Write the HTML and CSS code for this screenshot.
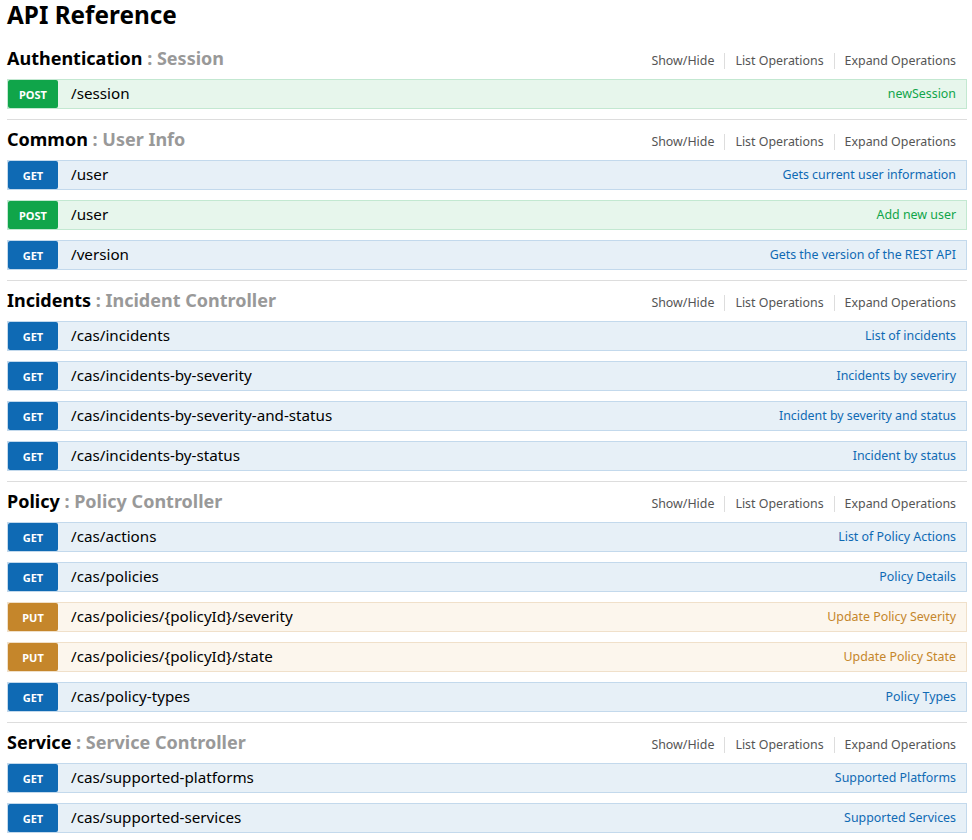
FILE: index.html
```html
<!DOCTYPE html>
<html lang="en">
<head>
<meta charset="utf-8">
<title>API Reference</title>
<link rel="stylesheet" href="styles.css">
</head>
<body>
<div class="page">
  <h1 class="title">API Reference</h1>

  <section class="resource first">
    <div class="heading">
      <h2 class="name">Authentication <span class="sub">: Session</span></h2>
      <ul class="options"><li>Show/Hide</li><li>List Operations</li><li>Expand Operations</li></ul>
    </div>
    <ul class="ops">
      <li class="op post"><span class="verb">POST</span><span class="path">/session</span><span class="desc">newSession</span></li>
    </ul>
  </section>

  <section class="resource">
    <div class="heading">
      <h2 class="name">Common <span class="sub">: User Info</span></h2>
      <ul class="options"><li>Show/Hide</li><li>List Operations</li><li>Expand Operations</li></ul>
    </div>
    <ul class="ops">
      <li class="op get"><span class="verb">GET</span><span class="path">/user</span><span class="desc">Gets current user information</span></li>
      <li class="op post"><span class="verb">POST</span><span class="path">/user</span><span class="desc">Add new user</span></li>
      <li class="op get"><span class="verb">GET</span><span class="path">/version</span><span class="desc">Gets the version of the REST API</span></li>
    </ul>
  </section>

  <section class="resource">
    <div class="heading">
      <h2 class="name">Incidents <span class="sub">: Incident Controller</span></h2>
      <ul class="options"><li>Show/Hide</li><li>List Operations</li><li>Expand Operations</li></ul>
    </div>
    <ul class="ops">
      <li class="op get"><span class="verb">GET</span><span class="path">/cas/incidents</span><span class="desc">List of incidents</span></li>
      <li class="op get"><span class="verb">GET</span><span class="path">/cas/incidents-by-severity</span><span class="desc">Incidents by severiry</span></li>
      <li class="op get"><span class="verb">GET</span><span class="path">/cas/incidents-by-severity-and-status</span><span class="desc">Incident by severity and status</span></li>
      <li class="op get"><span class="verb">GET</span><span class="path">/cas/incidents-by-status</span><span class="desc">Incident by status</span></li>
    </ul>
  </section>

  <section class="resource">
    <div class="heading">
      <h2 class="name">Policy <span class="sub">: Policy Controller</span></h2>
      <ul class="options"><li>Show/Hide</li><li>List Operations</li><li>Expand Operations</li></ul>
    </div>
    <ul class="ops">
      <li class="op get"><span class="verb">GET</span><span class="path">/cas/actions</span><span class="desc">List of Policy Actions</span></li>
      <li class="op get"><span class="verb">GET</span><span class="path">/cas/policies</span><span class="desc">Policy Details</span></li>
      <li class="op put"><span class="verb">PUT</span><span class="path">/cas/policies/{policyId}/severity</span><span class="desc">Update Policy Severity</span></li>
      <li class="op put"><span class="verb">PUT</span><span class="path">/cas/policies/{policyId}/state</span><span class="desc">Update Policy State</span></li>
      <li class="op get"><span class="verb">GET</span><span class="path">/cas/policy-types</span><span class="desc">Policy Types</span></li>
    </ul>
  </section>

  <section class="resource">
    <div class="heading">
      <h2 class="name">Service <span class="sub">: Service Controller</span></h2>
      <ul class="options"><li>Show/Hide</li><li>List Operations</li><li>Expand Operations</li></ul>
    </div>
    <ul class="ops">
      <li class="op get"><span class="verb">GET</span><span class="path">/cas/supported-platforms</span><span class="desc">Supported Platforms</span></li>
      <li class="op get"><span class="verb">GET</span><span class="path">/cas/supported-services</span><span class="desc">Supported Services</span></li>
    </ul>
  </section>
</div>
</body>
</html>
```

FILE: styles.css
```css
* { box-sizing: border-box; }
html, body { margin: 0; padding: 0; background: #fff; }
body {
  font-family: "Noto Sans", "Open Sans", "DejaVu Sans", sans-serif;
  color: #000;
}
.page {
  width: 960px;
  margin-left: 7px;
}
.title {
  margin: 0;
  height: 38px;
  font-size: 24.3px;
  font-weight: 700;
  line-height: 30px;
  padding-top: 0;
}
.resource {
  border-top: 1px solid #ddd;
}
.resource.first {
  border-top-color: transparent;
}
.heading {
  height: 40px;
  display: flex;
  align-items: center;
  justify-content: space-between;
}
.name {
  margin: -2px 0 0 0;
  font-size: 18px;
  font-weight: 700;
  line-height: 24px;
}
.sub { color: #999; }
.options {
  list-style: none;
  margin: 3px 0 0 0;
  padding: 0 11px 0 0;
  display: flex;
  font-size: 12.4px;
  color: #555;
}
.options li {
  padding: 0 10px;
  line-height: 16px;
  border-left: 1px solid #ddd;
}
.options li:first-child { border-left: none; }
.options li:last-child { padding-right: 0; }
.ops {
  list-style: none;
  margin: 0;
  padding: 0 0 10px 0;
}
.op {
  display: flex;
  align-items: center;
  height: 30px;
  border: 1px solid;
  margin-bottom: 10px;
}
.op:last-child { margin-bottom: 0; }
.verb {
  width: 50px;
  height: 28px;
  border-radius: 2px;
  color: #fff;
  font-size: 11px;
  font-weight: 700;
  display: flex;
  align-items: center;
  justify-content: center;
  flex: none;
}
.path {
  padding-left: 13px;
  padding-bottom: 2px;
  font-size: 15.2px;
  flex: 1;
}
.desc {
  font-size: 12.4px;
  padding-right: 10px;
  padding-bottom: 2px;
}
.get { background: #e7f0f7; border-color: #c3d9ec; }
.get .verb { background: #0f6ab4; }
.get .desc { color: #0f6ab4; }
.post { background: #e7f6ec; border-color: #c3e8d1; }
.post .verb { background: #10a54a; }
.post .desc { color: #10a54a; }
.put { background: #fcf6ed; border-color: #f0e0ca; }
.put .verb { background: #c5862b; }
.put .desc { color: #c5862b; }
```
